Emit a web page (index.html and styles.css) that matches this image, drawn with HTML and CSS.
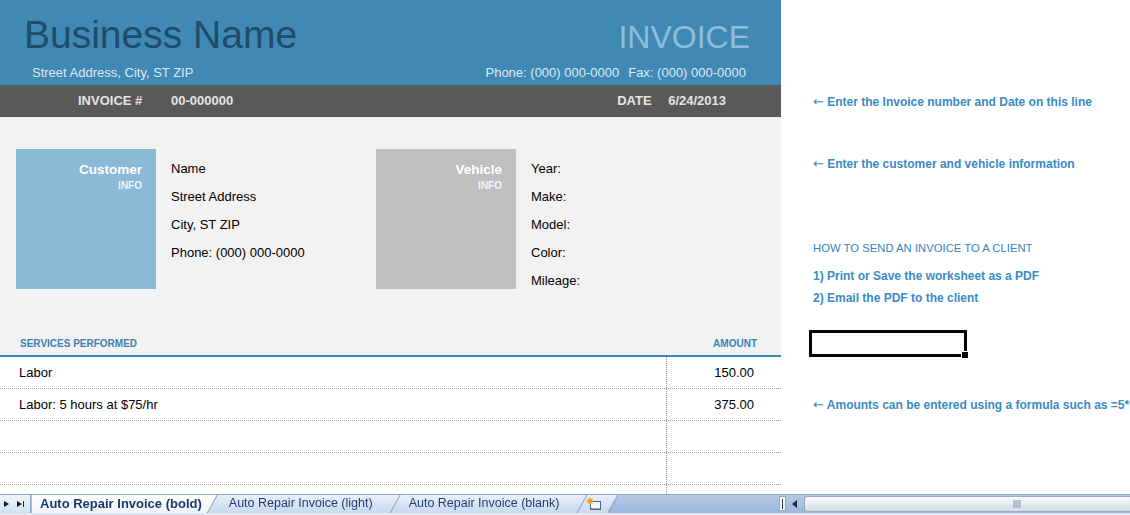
FILE: index.html
```html
<!DOCTYPE html>
<html lang="en">
<head>
    <meta charset="UTF-8">
    <title>Auto Repair Invoice</title>
    <link rel="stylesheet" href="styles.css">
</head>
<body>

<div class="window">
    <div class="main">
        <div class="sheet">
            <!-- Company header -->
            <div class="header">
                <div class="header-top">
                    <h1 class="business">Business Name</h1>
                    <div class="doc-title">INVOICE</div>
                </div>
                <div class="header-sub">
                    <span>Street Address, City, ST ZIP</span>
                    <span>Phone: (000) 000-0000<span class="fax">Fax: (000) 000-0000</span></span>
                </div>
            </div>

            <div class="meta-bar">
                <span class="meta-label">INVOICE #</span>
                <span class="meta-value">00-000000</span>
                <span class="meta-label date">DATE</span>
                <span class="meta-value">6/24/2013</span>
            </div>

            <div class="details">
                <div class="parties">
                    <div class="party">
                        <div class="party-tag customer">
                            <strong>Customer</strong>
                            <small>INFO</small>
                        </div>
                        <ul class="party-lines">
                            <li>Name</li>
                            <li>Street Address</li>
                            <li>City, ST ZIP</li>
                            <li>Phone: (000) 000-0000</li>
                        </ul>
                    </div>
                    <div class="party">
                        <div class="party-tag vehicle">
                            <strong>Vehicle</strong>
                            <small>INFO</small>
                        </div>
                        <ul class="party-lines">
                            <li>Year:</li>
                            <li>Make:</li>
                            <li>Model:</li>
                            <li>Color:</li>
                            <li>Mileage:</li>
                        </ul>
                    </div>
                </div>
                <div class="services-head">
                    <span>SERVICES PERFORMED</span>
                    <span>AMOUNT</span>
                </div>
            </div>

            <div class="rows">
                <div class="row"><div class="desc">Labor</div><div class="amount">150.00</div></div>
                <div class="row"><div class="desc">Labor: 5 hours at $75/hr</div><div class="amount">375.00</div></div>
                <div class="row"><div class="desc"></div><div class="amount"></div></div>
                <div class="row"><div class="desc"></div><div class="amount"></div></div>
                <div class="row"><div class="desc"></div><div class="amount"></div></div>
            </div>
        </div>

        <!-- Side notes -->
        <div class="notes">
            <p class="note first"><span class="arrow">&larr;</span> Enter the Invoice number and Date on this line</p>
            <p class="note second"><span class="arrow">&larr;</span> Enter the customer and vehicle information</p>
            <p class="note howto">HOW TO SEND AN INVOICE TO A CLIENT</p>
            <p class="note step1">1) Print or Save the worksheet as a PDF</p>
            <p class="note step2">2) Email the PDF to the client</p>
            <div class="cell-select"></div>
            <p class="note amounts"><span class="arrow">&larr;</span> Amounts can be entered using a formula such as =5*75</p>
        </div>
    </div>

    <!-- Sheet tabs -->
    <div class="tabbar">
        <div class="tab-nav">
            <svg width="28" height="12" viewBox="0 0 28 12">
                <path d="M4 3 L9 6 L4 9 Z" fill="#1a1a1a"/>
                <path d="M17 3 L22 6 L17 9 Z" fill="#1a1a1a"/>
                <rect x="23" y="3" width="1" height="6" fill="#1a1a1a"/>
            </svg>
        </div>
        <div class="tabs">
            <div class="tab active"><div class="tab-face">Auto Repair Invoice (bold)</div></div>
            <div class="tab light"><div class="tab-face">Auto Repair Invoice (light)</div></div>
            <div class="tab blank"><div class="tab-face">Auto Repair Invoice (blank)</div></div>
            <div class="tab new"><div class="tab-face">
                <svg width="16" height="14" viewBox="0 0 16 14">
                    <rect x="4.5" y="4.5" width="10" height="8" fill="#f4f6f9" stroke="#5a6478"/>
                    <rect x="5" y="11" width="9" height="1" fill="#9aa4b6"/>
                    <circle cx="4" cy="4" r="2.2" fill="#f6b01e"/>
                    <path d="M4 0 V8 M0 4 H8 M1.2 1.2 L6.8 6.8 M6.8 1.2 L1.2 6.8" stroke="#f39a12" stroke-width="0.9"/>
                </svg>
            </div></div>
        </div>
        <div class="tab-fill"></div>
        <div class="hscroll">
            <div class="split"><span></span></div>
            <div class="scroll-left">
                <svg width="8" height="10" viewBox="0 0 8 10"><path d="M6 1 L1 5 L6 9 Z" fill="#1e2a3c"/></svg>
            </div>
            <div class="scroll-thumb">
                <svg width="9" height="8" viewBox="0 0 9 8">
                    <path d="M1 0 V8 M3 0 V8 M5 0 V8 M7 0 V8" stroke="#8a94a4" stroke-width="1"/>
                </svg>
            </div>
        </div>
    </div>
</div>

</body>
</html>
```

FILE: styles.css
```css
body {
    margin: 0;
    font-family: "Liberation Sans", Arial, sans-serif;
    background-color: #fff;
    width: 1130px;
    height: 515px;
    overflow: hidden;
}

.window {
    width: 1130px;
    height: 515px;
    overflow: hidden;
}

.main {
    display: flex;
    height: 494px;
}

.sheet {
    width: 781px;
    flex: none;
    height: 494px;
    overflow: hidden;
}

/* header */
.header {
    background-color: #4089b5;
    height: 85px;
    box-sizing: border-box;
}

.header-top {
    display: flex;
    justify-content: space-between;
    align-items: baseline;
    padding: 16px 31px 0 24px;
    height: 54px;
    box-sizing: border-box;
}

.business {
    margin: 0;
    font-size: 39px;
    line-height: 38px;
    font-weight: normal;
    color: #1f4d6c;
}

.doc-title {
    font-size: 32px;
    line-height: 38px;
    color: #8dbedc;
}

.header-sub {
    display: flex;
    justify-content: space-between;
    margin-top: 11px;
    padding: 0 35px 0 32px;
    font-size: 13px;
    line-height: 16px;
    color: #dcebf5;
}

.fax {
    margin-left: 9px;
}

.meta-bar {
    display: flex;
    height: 32px;
    line-height: 32px;
    background-color: #595959;
    color: #e4e4e4;
    font-size: 13px;
    font-weight: bold;
    padding: 0 55px 0 78px;
}

.meta-label {
    width: 93px;
}

.meta-label.date {
    width: 51px;
    margin-left: auto;
}

/* customer / vehicle blocks */
.details {
    background-color: #f2f2f2;
    border-bottom: 2px solid #4289b5;
    padding-top: 32px;
}

.parties {
    display: flex;
    height: 140px;
    padding-left: 16px;
}

.party {
    display: flex;
    align-items: flex-start;
    width: 360px;
}

.party-tag {
    width: 140px;
    height: 140px;
    flex: none;
    box-sizing: border-box;
    padding: 12px 14px 0 0;
    text-align: right;
    color: #fff;
}

.party-tag.customer {
    background-color: #8bb9d6;
}

.party-tag.vehicle {
    background-color: #bfbfbf;
}

.party-tag strong {
    display: block;
    font-size: 13.5px;
    line-height: 17px;
}

.party-tag small {
    display: block;
    margin-top: 2px;
    font-size: 10px;
    line-height: 12px;
    font-weight: bold;
    color: #f1f6fa;
}

.party-lines {
    list-style: none;
    margin: 0 0 0 15px;
    padding: 6px 0 0 0;
    font-size: 13px;
    line-height: 28px;
    color: #000;
}

.services-head {
    display: flex;
    justify-content: space-between;
    align-items: flex-end;
    height: 66px;
    box-sizing: border-box;
    padding: 0 24px 5px 20px;
    font-size: 10px;
    line-height: 12px;
    font-weight: bold;
    color: #3e80b1;
}

/* service rows */
.row {
    display: flex;
    height: 32px;
    box-sizing: border-box;
    border-bottom: 1px dotted #999;
    font-size: 13px;
    line-height: 31px;
    color: #000;
}

.desc {
    width: 666px;
    padding-left: 19px;
    box-sizing: border-box;
}

.amount {
    width: 115px;
    box-sizing: border-box;
    border-left: 1px dotted #999;
    text-align: right;
    padding-right: 27px;
}

/* notes on the right */
.notes {
    flex: 1;
    padding: 95px 0 0 32px;
    white-space: nowrap;
    overflow: hidden;
}

.note {
    margin: 0;
    font-size: 12px;
    line-height: 14px;
    font-weight: bold;
    color: #3a8bc6;
}

.arrow {
    font-family: "DejaVu Sans", sans-serif;
    font-weight: normal;
    font-size: 13px;
    line-height: 14px;
}

.note.second {
    margin-top: 48px;
}

.note.howto {
    margin-top: 70px;
    font-size: 11.3px;
    font-weight: normal;
    color: #3685bf;
}

.note.step1 {
    margin-top: 14px;
}

.note.step2 {
    margin-top: 8px;
}

.cell-select {
    position: relative;
    margin: 25px 0 0 -4px;
    width: 158px;
    height: 27px;
    box-sizing: border-box;
    border: 3px solid #000;
}

.cell-select::after {
    content: "";
    position: absolute;
    right: -5px;
    bottom: -5px;
    width: 6px;
    height: 6px;
    background-color: #000;
    border: 1px solid #fff;
}

.note.amounts {
    margin-top: 41px;
}

/* sheet tabs */
.tabbar {
    display: flex;
    height: 21px;
    box-sizing: border-box;
    border-top: 1px solid #8ea9cf;
    border-bottom: 2px solid #dfe8f4;
    background: linear-gradient(#b4c9e6, #9db7db);
    overflow: hidden;
}

.tab-nav {
    width: 31px;
    flex: none;
    display: flex;
    align-items: center;
    background: linear-gradient(#edf3fb, #d3e1f2);
    border-right: 1px solid #8ea9cf;
    box-sizing: border-box;
}

.tabs {
    display: flex;
    flex: none;
    margin-left: 1px;
}

.tab {
    position: relative;
    margin-left: -10px;
    filter: drop-shadow(1px 0 0 #7d9ac5);
}

.tab-face {
    height: 18px;
    font-size: 12.5px;
    line-height: 17px;
    color: #1f3d73;
    white-space: nowrap;
    background: linear-gradient(#e9f0f9, #c8d8ee);
    clip-path: polygon(0 100%, 10px 0, 100% 0, calc(100% - 10px) 100%);
    padding: 0 27px 0 22px;
}

.tab.active {
    margin-left: 0;
    z-index: 4;
}

.tab.active .tab-face {
    font-size: 13px;
    font-weight: bold;
    color: #1b376b;
    background: linear-gradient(#ffffff, #f0f4fa);
    clip-path: polygon(0 0, 100% 0, calc(100% - 10px) 100%, 0 100%);
    padding: 0 15px 0 8px;
}

.tab.light {
    z-index: 3;
}

.tab.blank {
    z-index: 2;
}

.tab.blank .tab-face {
    padding-left: 19px;
}

.tab.new {
    z-index: 1;
}

.tab.new .tab-face {
    width: 41px;
    box-sizing: border-box;
    padding: 2px 0 0 10px;
}

.tab-fill {
    flex: 1;
}

.hscroll {
    display: flex;
    width: 351px;
    flex: none;
}

.split {
    width: 7px;
    box-sizing: border-box;
    margin: 1px 0 2px;
    background: #f5f8fc;
    border: 1px solid #8ea9cf;
    display: flex;
    justify-content: center;
    align-items: center;
}

.split span {
    width: 1px;
    height: 10px;
    background: #333;
}

.scroll-left {
    width: 18px;
    display: flex;
    align-items: center;
    justify-content: center;
}

.scroll-thumb {
    flex: 1;
    margin: 1px 0 1px;
    border: 1px solid #9aaac2;
    border-right: none;
    border-radius: 3px 0 0 3px;
    background: linear-gradient(#fbfcfe, #e6eaf0 50%, #d6dce6);
    display: flex;
    align-items: center;
    padding-left: 208px;
}
```
